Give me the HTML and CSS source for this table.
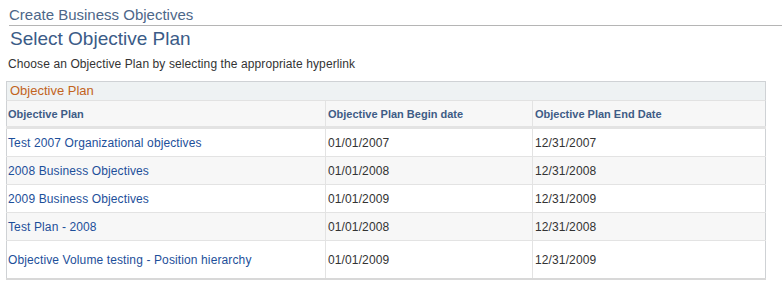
FILE: index.html
```html
<!DOCTYPE html>
<html>
<head>
<meta charset="utf-8">
<link rel="stylesheet" href="styles.css">
</head>
<body>
<div class="page">
  <div class="crumb">Create Business Objectives</div>
  <h1 class="title">Select Objective Plan</h1>
  <p class="instr">Choose an Objective Plan by selecting the appropriate hyperlink</p>
  <table class="grid">
    <caption class="cap">Objective Plan</caption>
    <colgroup><col class="c1"><col class="c2"><col class="c3"></colgroup>
    <thead>
      <tr><th>Objective Plan</th><th>Objective Plan Begin date</th><th>Objective Plan End Date</th></tr>
    </thead>
    <tbody>
      <tr><td><a href="#">Test 2007 Organizational objectives</a></td><td>01/01/2007</td><td>12/31/2007</td></tr>
      <tr class="alt"><td><a href="#">2008 Business Objectives</a></td><td>01/01/2008</td><td>12/31/2008</td></tr>
      <tr><td><a href="#">2009 Business Objectives</a></td><td>01/01/2009</td><td>12/31/2009</td></tr>
      <tr class="alt"><td><a href="#">Test Plan - 2008</a></td><td>01/01/2008</td><td>12/31/2008</td></tr>
      <tr class="tall"><td><a href="#">Objective Volume testing - Position hierarchy</a></td><td>01/01/2009</td><td>12/31/2009</td></tr>
    </tbody>
  </table>
</div>
</body>
</html>
```
FILE: styles.css
```css
html, body { margin: 0; padding: 0; background: #fff; }
body { font-family: "Liberation Sans", Arial, sans-serif; }
.page { padding: 0; }
.crumb {
  margin-left: 9px;
  padding-top: 6px;
  height: 19px;
  font-size: 15px;
  line-height: 18px;
  color: #4d6789;
  border-bottom: 1px solid #b5b5b5;
  box-sizing: content-box;
}
.title {
  margin: 2px 0 0 10px;
  font-size: 19px;
  font-weight: normal;
  line-height: 22px;
  color: #3b5b87;
}
.instr {
  margin: 7px 0 0 8px;
  font-size: 12px;
  line-height: 14px;
  letter-spacing: 0.1px;
  color: #333;
}
.grid {
  margin: 10px 0 0 6px;
  width: 759px;
  border-collapse: collapse;
  border: 1px solid #cfd2d5;
  border-top: none;
  font-size: 12px;
  letter-spacing: 0.12px;
  table-layout: fixed;
}
.c1 { width: 319px; }
.c2 { width: 207px; }
.c3 { width: 233px; }
.cap {
  text-align: left;
  background: #eef2f3;
  color: #c2641e;
  font-size: 13px;
  letter-spacing: 0;
  height: 18px;
  line-height: 18px;
  padding: 0 3px;
  border: 1px solid #cfd2d5;
  border-bottom: 1px solid #e2e2e2;
}
th {
  background: #f7f7f7;
  color: #3e5c86;
  font-size: 11px;
  font-weight: bold;
  letter-spacing: 0;
  text-align: left;
  height: 25px;
  padding: 0 2px;
  border-left: 1px solid #e3e3e3;
  border-bottom: 3px solid #e3e3e3;
}
td {
  height: 27px;
  padding: 0 2px;
  color: #333;
  border-left: 1px solid #e3e3e3;
  border-bottom: 1px solid #e3e3e3;
}
th:first-child, td:first-child { border-left: none; padding-left: 1px; }
tr.alt td { background: #f7f7f7; }
tr.tall td { height: 37px; border-bottom: 2px solid #d8d8d8; }
a { color: #1d4f9a; text-decoration: none; }
```
